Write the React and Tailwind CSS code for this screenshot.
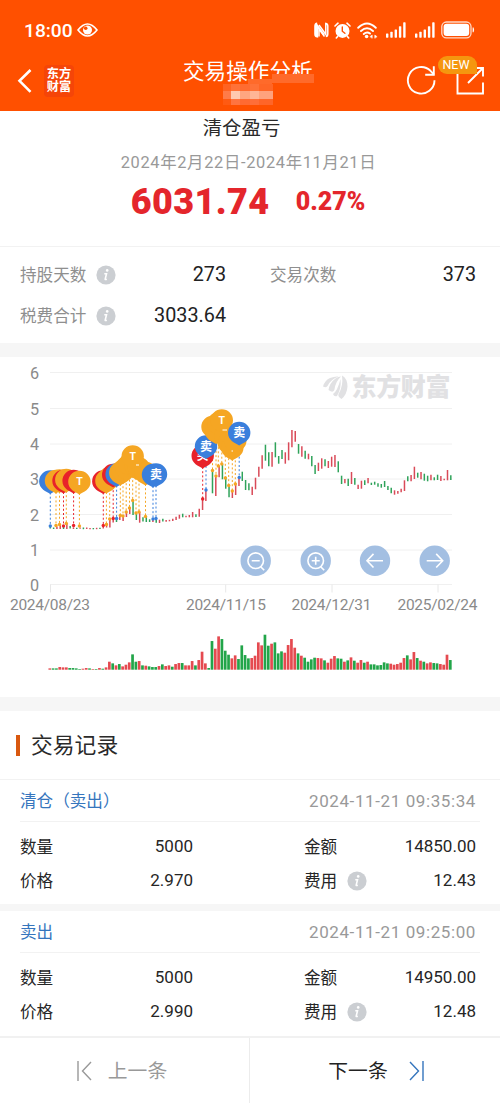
import { clsx } from "clsx";

const RED = "#d94a58";
const GREEN = "#2fa35a";
const PIN = { b: "#3a7fdc", r: "#e8222a", o: "#f5a623" };

// One entry per trading day: colour, high and low in chart pixels.
const candles = [
  ["g", 169.5, 171.5], ["g", 170.5, 172], ["r", 169.5, 172], ["r", 168, 172], ["g", 169.5, 172], ["r", 167, 172], ["g", 169, 171.5],
  ["r", 170.3, 172], ["g", 170.8, 172], ["r", 170.5, 171.8], ["g", 170.5, 172.2], ["r", 170.5, 172], ["r", 171, 172.2], ["g", 171, 172.3],
  ["r", 170.8, 172.2], ["g", 170.8, 172], ["r", 168, 171.5], ["r", 166, 170.5], ["r", 162, 170.5], ["r", 161, 165.5], ["g", 161, 165],
  ["r", 158, 163], ["r", 159, 164], ["r", 155, 160], ["r", 150, 157], ["g", 143, 158], ["g", 156, 163], ["r", 155, 165.7],
  ["g", 160.3, 164.5], ["g", 159, 165], ["g", 162.3, 165], ["r", 161.3, 165], ["g", 161, 165.7], ["r", 162.7, 166], ["g", 161.7, 164.5],
  ["r", 163, 164.7], ["r", 162.8, 164.3], ["r", 161.7, 164], ["r", 159.7, 163], ["r", 157.7, 161.7], ["g", 156.7, 160.3], ["r", 158.7, 160.3],
  ["r", 158, 160.3], ["r", 155, 160.3], ["g", 157.3, 160], ["r", 151.7, 159.7], ["r", 140.3, 153], ["r", 132.3, 144], null,
  ["g", 113, 136.3], ["r", 119, 139], ["r", 109, 120.3], ["g", 107, 122.3], ["g", 119.7, 131.7], ["g", 129, 140.3], ["r", 134.7, 141],
  ["r", 126.3, 138], ["r", 120.3, 129], ["g", 114.7, 124], ["g", 123, 133], ["g", 126.3, 133.3], ["r", 129.7, 138], ["r", 120.7, 132.3],
  ["r", 109.7, 119.7], ["r", 98.3, 111.7], ["g", 87.7, 103.7], ["g", 95.3, 109.3], ["r", 95, 109.7], ["g", 85.3, 100.3], ["g", 99, 106.7],
  ["g", 93, 102], ["r", 95.3, 106.7], ["r", 85.3, 103.3], ["r", 73, 90.3], ["r", 74, 84.7], ["g", 87, 96.7], ["r", 89.3, 99.7],
  ["g", 93.7, 101.7], ["r", 96.7, 102.3], ["g", 99, 109.3], ["g", 108, 117], ["r", 105.7, 114], ["r", 101.3, 111.7], ["g", 102.3, 109.3],
  ["r", 104, 111], ["r", 99.7, 109.7], ["r", 98, 110], ["g", 104.3, 115.3], ["g", 118.7, 127], ["r", 122, 126.3], ["g", 121.7, 129],
  ["r", 115, 127], ["g", 121, 127.7], ["r", 127.7, 132], ["r", 123.7, 131.7], ["g", 123.3, 128], ["r", 121, 126.3], ["g", 125.7, 128],
  ["g", 124.7, 127.7], ["g", 126.3, 129.7], ["g", 127, 130.7], ["g", 124, 130], ["g", 129, 133], ["g", 130.7, 136.3], ["r", 133.3, 137.7],
  ["r", 134, 136.7], ["r", 131.7, 135.3], ["r", 123.3, 134], ["g", 119.3, 124.3], ["r", 118, 124.3], ["r", 109.7, 122], ["g", 115.7, 120.7],
  ["r", 115, 122.3], ["g", 116.7, 123.7], ["g", 118.7, 124.3], ["r", 117.7, 123.3], ["g", 120.3, 123.3], ["g", 117.7, 123], ["r", 119, 124],
  ["r", 121.7, 123.3], ["r", 113, 123.3], ["g", 118.3, 123],
];

const volumes =
  "r4 g4 g4 r8 r7 r7 g5 g5 g4 g2 r3 r5 g4 r2 g2 r5 g3 r7 r24 g19 r13 g17 r10 r15 r22 g46 g24 r26 g13 r12 g10 g8 g8 r11 g16 r11 r13 g9 r17 r20 g20 r13 r13 r26 g13 r29 r54 r19 g5 g86 r63 r100 g92 g57 g45 r34 r43 g32 g73 g44 g34 r35 r42 r82 r73 g105 g72 r78 g82 g49 g55 r51 r74 r92 r66 g49 r42 g36 g24 g31 g36 r35 r34 g28 r21 r33 r41 g34 g33 r24 g28 r37 g27 r21 r29 g21 r24 g16 g16 g13 g14 g22 g19 r18 r15 r17 r21 r35 g43 r31 r53 g35 r27 g24 r19 r22 g20 g19 r17 r15 r45 g29"
    .split(" ")
    .map((v) => [v[0], Number(v.slice(1)) / 3]);

// colour, x, circle centre y, y of the day's price, label
const pins = [
  ["b", 50.3, 124.5, 169],
  ["o", 56, 124, 168.5],
  ["o", 59.5, 123.5, 167.5],
  ["r", 63.5, 124, 169],
  ["o", 66.3, 123, 166.5],
  ["r", 73.6, 124, 168.5],
  ["o", 79.4, 125, 169, "T"],
  ["r", 103.3, 124.5, 168.5],
  ["o", 106.4, 124, 167.5],
  ["o", 109.7, 121, 162],
  ["r", 113.2, 118, 161.5],
  ["b", 116.6, 117.5, 161.5],
  ["o", 120.3, 116, 158.5],
  ["o", 123, 114, 159],
  ["o", 126.2, 111, 155],
  ["o", 129.5, 107.5, 151],
  ["o", 136, 110, 156],
  ["o", 139, 111.5, 155],
  ["o", 145.5, 116, 159.5],
  ["o", 132.7, 99.5, 143.5, "T"],
  ["b", 153, 118, 162],
  ["b", 156, 117.5, 161.5, "卖"],
  ["r", 202.7, 99, 142, "买"],
  ["b", 206, 89.5, 133, "卖"],
  ["o", 212.5, 70, 113.5],
  ["o", 216, 74.5, 119],
  ["o", 218.3, 66.5, 109],
  ["o", 225.3, 79, 121],
  ["o", 228.7, 86, 128.5],
  ["o", 232.3, 91, 134],
  ["o", 235.3, 84, 127],
  ["o", 221.8, 63.5, 107, "T"],
  ["b", 239.2, 76, 120.5, "卖"],
];

const grid = [15.5, 51.5, 87, 122, 157.5, 193, 227.5];
const ticks = [
  ["2024/08/23", 10, 50.5],
  ["2024/11/15", 186, 225.7],
  ["2024/12/31", 291.5, 332],
  ["2025/02/24", 397.5, 438],
];

const records = [
  { type: "清仓（卖出）", time: "2024-11-21 09:35:34", qty: "5000", amount: "14850.00", price: "2.970", fee: "12.43" },
  { type: "卖出", time: "2024-11-21 09:25:00", qty: "5000", amount: "14950.00", price: "2.990", fee: "12.48" },
];

const dayX = (i) => 49.8 + i * 3.31;
const tone = (c) => (c === "r" ? RED : GREEN);

function InfoIcon({ className }) {
  return (
    <svg width="20" height="20" viewBox="0 0 20 20" className={clsx("shrink-0", className)} aria-hidden="true">
      <circle cx="10" cy="10" r="9.6" fill="#cbced2" />
      <circle cx="11.2" cy="5.4" r="1.3" fill="#fff" />
      <path d="M8.3 8.8h2.2l-1.3 5.3q-.1.8 1.6.2" fill="none" stroke="#fff" strokeWidth="1.6" />
    </svg>
  );
}

function Signal() {
  return (
    <svg width="20" height="16" viewBox="0 0 20 16" fill="#fff" aria-hidden="true">
      <rect x="0" y="11.5" width="2.4" height="4.2" rx=".6" />
      <rect x="4.3" y="9.8" width="2.4" height="5.9" rx=".6" />
      <rect x="8.6" y="7.4" width="2.4" height="8.3" rx=".6" />
      <rect x="12.9" y="4.2" width="2.4" height="11.5" rx=".6" />
      <rect x="17.2" y=".3" width="2.4" height="15.4" rx=".6" />
    </svg>
  );
}

function StatusBar() {
  return (
    <div className="flex h-[60px] items-center pl-[24px] pr-[25px] text-white">
      <span className="mt-px text-[19.2px] font-medium leading-none">18:00</span>
      <svg width="21" height="16" viewBox="0 0 21 16" className="ml-[4px]" fill="none" aria-hidden="true">
        <path d="M1 8Q10.5-4 20 8Q10.5 20 1 8Z" stroke="#fff" strokeWidth="1.6" />
        <circle cx="10.5" cy="8" r="4.5" fill="#fff" />
        <circle cx="8.7" cy="6.2" r="1.8" fill="#ff5000" />
      </svg>
      <div className="ml-auto flex items-center">
        <svg width="15" height="16" viewBox="0 0 15 16" fill="none" aria-hidden="true">
          <path d="M3.2 1.400Q1.200 1.600 1.200 4v8q0 2.400 2 2.600V3.500L10 13" stroke="#fff" strokeWidth="2" />
          <path d="M5 3l6.800 9.500V1.400q2 .2 2 2.600v8q0 2.400-2 2.600M5 14.500V7l5.500 7.500" stroke="#fff" strokeWidth="1.500" />
        </svg>
        <svg width="17" height="17" viewBox="0 0 17 17" className="ml-[5px]" fill="none" strokeLinecap="round" aria-hidden="true">
          <circle cx="8.5" cy="8.9" r="7" fill="#fff" />
          <path d="M1 4L4 1.2M16 4L13 1.2M3.6 14.4L2.3 16M13.4 14.4L14.7 16" stroke="#fff" strokeWidth="1.6" />
          <path d="M8.3 5v4.2l2.6 2" stroke="#ff5000" strokeWidth="1.4" />
        </svg>
        <svg width="21" height="17" viewBox="0 0 21 17" className="ml-[6px]" fill="none" strokeLinecap="round" aria-hidden="true">
          <path d="M1.2 5.8Q10-2.6 18.8 5.8M4 9q6-5.4 12 0M6.8 12q3.2-2.8 6.2-.4" stroke="#fff" strokeWidth="1.9" />
          <circle cx="9.6" cy="14.5" r="1.8" fill="#fff" />
          <path d="M13.2 14.5l2-1.4v2.8zM19.8 14.5l-2-1.4v2.8z" fill="#fff" stroke="#fff" strokeWidth=".6" />
        </svg>
        <span className="ml-2"><Signal /></span>
        <span className="ml-[9px]"><Signal /></span>
        <svg width="34" height="18" viewBox="0 0 34 18" className="ml-[6px]" aria-hidden="true">
          <rect x=".8" y="1" width="29.2" height="15.8" rx="4.6" fill="none" stroke="#ffd9c8" strokeWidth="1.3" />
          <rect x="2.6" y="2.8" width="25.6" height="12.2" rx="3" fill="#fff" />
          <path d="M31.600 6.500h1q1 2.400 0 4.800h-1z" fill="#fff" />
        </svg>
      </div>
    </div>
  );
}

function Header() {
  return (
    <header className="h-[111px] shrink-0 bg-[#ff5000]">
      <StatusBar />
      <div className="relative flex h-[50px] items-start px-[15px] text-white">
        <svg width="19" height="26" viewBox="0 0 19 26" className="mt-[8px]" fill="none" aria-hidden="true">
          <path d="M15.5 2L4.5 12.8l11 11" stroke="#fff" strokeWidth="2.6" />
        </svg>
        <div className="ml-[10px] mt-[5px] flex h-[32px] w-[30px] flex-col items-center justify-center rounded bg-[#f54508] text-[12.2px] font-bold leading-[13.5px]">
          <span>东方</span>
          <span>财富</span>
        </div>
        <h1 className="absolute left-[183px] top-[-3px] text-[21.6px] leading-[30px]">交易操作分析</h1>
        {/* masked account name */}
        <div className="absolute left-[272px] top-[14px] h-[9px] w-[42px] bg-[#ff6a2a]" />
        <div className="absolute left-[248px] top-[19px] h-[5px] w-[24px] bg-[#ff6a2a]" />
        <div className="absolute left-[223px] top-[24px] grid h-[21px] w-[50px] grid-cols-[8px_9px_10px_9px_14px] grid-rows-[7px_8px_6px]">
          <i className="bg-[#ff6322]" /><i className="bg-[#ff7238]" /><i className="bg-[#ff6c30]" /><i className="bg-[#ff7238]" /><i className="bg-[#ff6626]" />
          <i className="bg-[#ff7b48]" /><i className="bg-[#ffc9b0]" /><i className="bg-[#ffa680]" /><i className="bg-[#ffb596]" /><i className="bg-[#ffa27c]" />
          <i className="bg-[#ff5a12]" /><i className="bg-[#ff7440]" /><i className="bg-[#ff6a32]" /><i className="bg-[#ff6e38]" /><i className="bg-[#ff6528]" />
        </div>
        <svg width="30" height="30" viewBox="0 0 30 30" className="ml-auto mt-[5px]" fill="none" aria-hidden="true">
          <path d="M28.5 15.2A13.3 13.3 0 1 1 24.5 5.8L28 9.6" stroke="#fff" strokeWidth="1.9" />
          <path d="M27.8 1.2v8.6h-8.6" stroke="#fff" strokeWidth="1.9" />
        </svg>
        <svg width="29" height="29" viewBox="0 0 29 29" className="ml-[20px] mt-[6px]" fill="none" aria-hidden="true">
          <path d="M9 2H1.5v25.5H27V16.5M18.5 2H27v8.5M12 17L27 2" stroke="#fff" strokeWidth="1.9" />
        </svg>
        <span className="absolute left-[438px] top-[-4px] h-[18px] w-[39px] rounded-full rounded-br-none bg-[#f5960f] pr-[3px] text-center text-[12.5px] leading-[18.5px]">
          NEW
        </span>
      </div>
    </header>
  );
}

function Stat({ label, value, info, className }) {
  return (
    <div className={clsx("flex h-[41px] items-center", className)}>
      <span className="pt-[3px] text-[16.6px] text-[#8f8f8f]">{label}</span>
      {info && <InfoIcon className="ml-[10px]" />}
      <span className="ml-auto pt-px text-[19.8px] text-[#222]">{value}</span>
    </div>
  );
}

function Summary() {
  return (
    <section className="shrink-0">
      <div className="flex h-[136px] flex-col items-center border-b border-[#f2f2f2]">
        <h2 className="mr-[17px] mt-[4px] text-[19.4px] leading-[28px] text-[#2a2a2a]">清仓盈亏</h2>
        <p className="mr-[3px] mt-[8px] text-[16.4px] leading-[24px] tracking-[0.66px] text-[#999]">2024年2月22日-2024年11月21日</p>
        <div className="mr-[4px] mt-[6px] flex h-[42px] items-center gap-[26px] font-black text-[#e4262c]">
          <span className="text-[36px] tracking-[0.4px]">6031.74</span>
          <span className="text-[25px]">0.27%</span>
        </div>
      </div>
      <div className="grid grid-cols-[206px_206px] gap-x-[44px] py-[7px] pl-[20px]">
        <Stat label="持股天数" value="273" info />
        <Stat label="交易次数" value="373" />
        <Stat label="税费合计" value="3033.64" info />
      </div>
    </section>
  );
}

function Pin({ color, x, y, label }) {
  return (
    <g transform={`translate(${x} ${y})`}>
      <path d="M0 12.5C-4 10-11.200 7.500-11.200 0A11.200 11.200 0 0 1 11.200 0C11.200 7.500 4 10 0 12.500Z" fill={PIN[color]} />
      {label && (
        <text y={label === "T" ? 3 : 4.2} textAnchor="middle" fill="#fff" fontSize={label === "T" ? 10.5 : 12} fontWeight="700">
          {label}
        </text>
      )}
    </g>
  );
}

function RoundButton({ x, children }) {
  return (
    <g transform={`translate(${x} 203.7)`} fill="none" stroke="#fff" strokeWidth="1.6">
      <circle r="15.2" fill="#a3bfe2" stroke="none" />
      {children}
    </g>
  );
}

function Chart() {
  return (
    <svg width="500" height="340" viewBox="0 0 500 340" className="block shrink-0">
      {grid.map((y, i) => (
        <g key={y}>
          <path d={`M50 ${y}H452`} stroke="#f0f0f0" />
          <text x="39" y={y + 6} textAnchor="end" fontSize="16.2" fill="#8a8a8a">{6 - i}</text>
        </g>
      ))}
      {ticks.map(([label, x, tick]) => (
        <g key={label}>
          <path d={`M${tick} 227.5v8`} stroke="#e8e8e8" />
          <text x={x} y="252.6" textLength="80" fontSize="15.5" fill="#8a8a8a">{label}</text>
        </g>
      ))}

      <g fill="#e1e1e3">
        <path d="M323 29.5q2-6.5 7-8.5q5-2 8.5-1.5q-8 3-11 9.5q-1 2-4.5.5z" />
        <path d="M328.5 33q1-7 7-11.5q2.5-2 5.5-2q-5.5 5-6.500 13q-1 4-6 .5z" />
        <path d="M342 18.5q5.500 3 5.500 11q-.5 8-6 12.500q-4-2.500-3-5q5-8 3.500-18.500z" />
        <path d="M333 37q4.500-3 7.500-15q1 10-3.500 17q-3 1-4-2z" />
        <text x="351.5" y="39" textLength="99" fontSize="25" fontWeight="900">东方财富</text>
      </g>

      {candles.map((c, i) => c && <path key={i} d={`M${dayX(i) + 0.5} ${c[1]}V${c[2]}`} stroke={tone(c[0])} strokeWidth="1.5" />)}
      {pins.map(([c, x, y, end]) => (
        <g key={x}>
          <path d={`M${x} ${y + 11}V${end}`} stroke={PIN[c]} strokeWidth="1" strokeDasharray="2 2.2" />
          <circle cx={x} cy={end} r="1.7" fill={PIN[c]} />
        </g>
      ))}
      {pins.map(([c, x, y, , label]) => (
        <Pin key={x} color={c} x={x} y={y} label={label} />
      ))}
      <path d="M136 108h3M222.5 73h4.5M231.5 94h1.5" stroke="#fff" strokeWidth="1.2" />

      <RoundButton x={255.7}>
        <circle r="7.8" />
        <path d="M-4 0h8M5 6l3.5 3.5" />
      </RoundButton>
      <RoundButton x={315.7}>
        <circle r="7.8" />
        <path d="M-4 0h8M0-4v8M5 6l3.5 3.5" />
      </RoundButton>
      <RoundButton x={375}>
        <path d="M8 0H-7.5M-1.500-6.800L-8 0l6.500 6.800" />
      </RoundButton>
      <RoundButton x={434.7}>
        <path d="M-8 0H7.5M1.500-6.800L8 0 1.500 6.800" />
      </RoundButton>

      {volumes.map(([c, h], i) => (
        <rect key={i} x={dayX(i) - 1.35} y={312.7 - h} width="2.7" height={h} fill={c === "r" ? "#e54a50" : "#22a549"} />
      ))}
    </svg>
  );
}

function Field({ label, value, info }) {
  return (
    <div className="flex h-[34px] items-center text-[16.6px] text-[#262626]">
      <span className="pt-[2px]">{label}</span>
      {info && <InfoIcon className="ml-[10px]" />}
      <span className="ml-auto text-[17px]">{value}</span>
    </div>
  );
}

function Record({ record }) {
  return (
    <article>
      <div className="mx-[20px] flex h-[42px] items-center justify-between border-b border-[#f2f2f2] pr-[4px] pt-[2px]">
        <span className="pt-[2px] text-[16.6px] text-[#3575bd]">{record.type}</span>
        <time className="text-[17px] tracking-[0.6px] text-[#999]">{record.time}</time>
      </div>
      <div className="grid grid-cols-[173px_172px] gap-x-[111px] pl-[20px] pt-[8px]">
        <Field label="数量" value={record.qty} />
        <Field label="金额" value={record.amount} />
        <Field label="价格" value={record.price} />
        <Field label="费用" value={record.fee} info />
      </div>
    </article>
  );
}

export default function App() {
  return (
    <div className="flex h-[1103px] w-[500px] flex-col overflow-hidden bg-white font-[Roboto,'Noto_Sans_CJK_SC',sans-serif]">
      <Header />
      <Summary />
      <div className="h-[14px] shrink-0 bg-[#f6f6f6]" />
      <Chart />
      <div className="h-[14px] shrink-0 bg-[#f6f6f6]" />

      <div className="flex h-[69px] shrink-0 items-center border-b border-[#f2f2f2] pl-[16px]">
        <span className="mt-px h-[21px] w-[4px] bg-[#d9580f]" />
        <h2 className="ml-[11px] pt-[3px] text-[21.8px] text-[#2a2a2a]">交易记录</h2>
      </div>
      <div className="h-[124px] shrink-0">
        <Record record={records[0]} />
      </div>
      <div className="h-[7px] shrink-0 bg-[#f6f6f6]" />
      <div className="h-[125px] shrink-0">
        <Record record={records[1]} />
      </div>

      <footer className="grid grow grid-cols-2 border-t-2 border-[#f1f1f1] text-[19.8px]">
        <button type="button" className="flex items-center justify-center gap-[16px] border-r border-[#ececec] pr-[5px] text-[#999]">
          <svg width="15" height="20" viewBox="0 0 15 20" fill="none" stroke="currentColor" strokeWidth="1.4" aria-hidden="true">
            <path d="M1 0v20M14 1L5.500 10l8.500 9" />
          </svg>
          <span className="pt-[2px]">上一条</span>
        </button>
        <button type="button" className="flex items-center justify-center gap-[21px] pl-[2px] text-[#222]">
          <span className="pt-[2px]">下一条</span>
          <svg width="15" height="20" viewBox="0 0 15 20" fill="none" stroke="#3575bd" strokeWidth="1.4" aria-hidden="true">
            <path d="M14 0v20M1 1l8.500 9L1 19" />
          </svg>
        </button>
      </footer>
    </div>
  );
}
